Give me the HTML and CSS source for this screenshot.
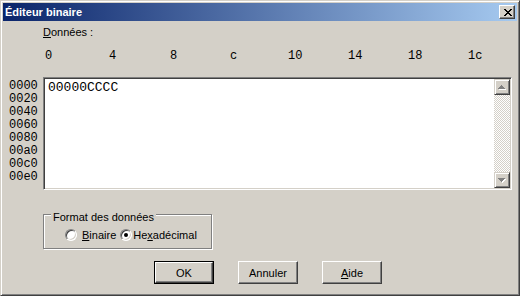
FILE: index.html
```html
<!DOCTYPE html>
<html lang="fr">
<head>
    <meta charset="UTF-8">
    <title>Éditeur binaire</title>
    <link rel="stylesheet" href="styles.css">
</head>
<body>

<div class="window">
    <div class="titlebar">
        <span class="title">Éditeur binaire</span>
        <span class="close">
            <svg width="8" height="7" viewBox="0 0 8 7" shape-rendering="crispEdges">
                <path fill="#000" d="M0 0h2v1H0z M6 0h2v1H6z M1 1h2v1H1z M5 1h2v1H5z M2 2h4v1H2z M3 3h2v1H3z M2 4h4v1H2z M1 5h2v1H1z M5 5h2v1H5z M0 6h2v1H0z M6 6h2v1H6z"/>
            </svg>
        </span>
    </div>

    <div class="content">
        <div class="data-label"><u>D</u>onnées :</div>

        <div class="columns">
            <span>0</span><span>4</span><span>8</span><span>c</span>
            <span>10</span><span>14</span><span>18</span><span>1c</span>
        </div>

        <div class="editor">
            <div class="offsets">
                <div>0000</div>
                <div>0020</div>
                <div>0040</div>
                <div>0060</div>
                <div>0080</div>
                <div>00a0</div>
                <div>00c0</div>
                <div>00e0</div>
            </div>
            <div class="textbox">
                <div class="hex">00000CCCC</div>
                <div class="scrollbar">
                    <span class="scroll-btn">
                        <svg width="8" height="5" viewBox="0 0 8 5" shape-rendering="crispEdges">
                            <path fill="#fff" transform="translate(1,1)" d="M3 0h1v1h1v1h1v1h1v1H0v-1h1v-1h1v-1h1z"/>
                            <path fill="#808080" d="M3 0h1v1h1v1h1v1h1v1H0v-1h1v-1h1v-1h1z"/>
                        </svg>
                    </span>
                    <span class="track"></span>
                    <span class="scroll-btn">
                        <svg width="8" height="5" viewBox="0 0 8 5" shape-rendering="crispEdges">
                            <path fill="#fff" transform="translate(1,1)" d="M0 0h7v1h-1v1h-1v1h-1v1h-1v-1h-1v-1h-1v-1h-1z"/>
                            <path fill="#808080" d="M0 0h7v1h-1v1h-1v1h-1v1h-1v-1h-1v-1h-1v-1h-1z"/>
                        </svg>
                    </span>
                </div>
            </div>
        </div>

        <div class="group">
            <div class="group-title">Format des données</div>
            <div class="radios">
                <label class="radio"><span class="dot"></span><span><u>B</u>inaire</span></label>
                <label class="radio checked"><span class="dot"></span><span>He<u>x</u>adécimal</span></label>
            </div>
        </div>

        <div class="buttons">
            <span class="btn default"><span>OK</span></span>
            <span class="btn"><span>Annuler</span></span>
            <span class="btn"><span><u>A</u>ide</span></span>
        </div>
    </div>
</div>

</body>
</html>
```

FILE: styles.css
```css
*{
    margin: 0px;
    padding: 0px;
    box-sizing: border-box;
}
body{
    font: 11px "Liberation Sans", Arial, sans-serif;
    color: #000;
    background-color: #d4d0c8;
}
u{
    text-decoration: underline;
    text-underline-offset: 1px;
}

/* cadre de la fenêtre */
.window{
    width: 520px;
    height: 296px;
    display: flex;
    flex-direction: column;
    padding: 2px;
    background-color: #d4d0c8;
    border: 1px solid;
    border-color: #d4d0c8 #404040 #404040 #d4d0c8;
    box-shadow: inset 1px 1px #fff, inset -1px -1px #808080;
}
.titlebar{
    height: 18px;
    display: flex;
    align-items: center;
    justify-content: space-between;
    padding: 0 2px;
    background: linear-gradient(to right, #0a246a, #a6caf0);
    color: #fff;
    font-weight: bold;
    line-height: 18px;
}
.close{
    width: 16px;
    height: 14px;
    display: flex;
    align-items: center;
    justify-content: center;
    padding-left: 1px;
    background-color: #d4d0c8;
    border: 1px solid;
    border-color: #fff #404040 #404040 #fff;
    box-shadow: inset -1px -1px #808080;
}

/* contenu */
.content{
    flex: 1;
    display: flex;
    flex-direction: column;
    padding-top: 5px;
}
.data-label{
    margin-left: 40px;
    line-height: 13px;
}
.columns{
    margin-top: 10px;
    padding-left: 42px;
    display: grid;
    grid-template-columns: 64px 61px 60px 58px 60px 60px 60px auto;
    font: 12px "Liberation Mono", "Courier New", monospace;
    line-height: 14px;
}

.editor{
    margin-top: 14px;
    display: flex;
    height: 113px;
}
.offsets{
    width: 40px;
    padding: 3px 0 0 6px;
    font: 12px "Liberation Mono", "Courier New", monospace;
    line-height: 13px;
}
.textbox{
    width: 469px;
    display: flex;
    padding: 1px;
    background-color: #fff;
    border: 1px solid;
    border-color: #808080 #fff #fff #808080;
    box-shadow: inset 1px 1px #404040, inset -1px -1px #d4d0c8;
}
.hex{
    flex: 1;
    padding: 1px 0 0 3px;
    font: 13px "Liberation Mono", "Courier New", monospace;
    line-height: 15px;
}
.scrollbar{
    width: 16px;
    display: flex;
    flex-direction: column;
}
.scroll-btn{
    width: 16px;
    height: 16px;
    display: flex;
    align-items: center;
    justify-content: center;
    background-color: #d4d0c8;
    border: 1px solid;
    border-color: #d4d0c8 #404040 #404040 #d4d0c8;
    box-shadow: inset 1px 1px #fff, inset -1px -1px #808080;
}
.track{
    flex: 1;
    background: repeating-conic-gradient(#d4d0c8 0 25%, #fff 0 50%) 0 0 / 2px 2px;
}

/* cadre de groupe */
.group{
    margin: 24px 0 0 40px;
    width: 169px;
    height: 35px;
    display: flex;
    flex-direction: column;
    align-items: flex-start;
    border: 1px solid #808080;
    box-shadow: inset 1px 1px #fff, 1px 1px #fff;
}
.group-title{
    margin: -4px 0 0 7px;
    padding: 0 2px;
    line-height: 13px;
    background-color: #d4d0c8;
}
.radios{
    margin-top: 5px;
    padding-left: 21px;
    display: flex;
    align-items: center;
    height: 12px;
}
.radio{
    display: flex;
    align-items: center;
    gap: 5px;
    margin-right: 4px;
    line-height: 13px;
}
.radio.checked{
    gap: 1px;
}
.dot{
    width: 12px;
    height: 12px;
    border-radius: 50%;
    display: flex;
    align-items: center;
    justify-content: center;
    background-color: #fff;
    border: 1px solid;
    border-color: #808080 #fff #fff #808080;
    box-shadow: inset 1px 1px #404040, inset -1px -1px #d4d0c8;
}
.checked .dot::after{
    content: "";
    width: 4px;
    height: 4px;
    border-radius: 50%;
    background-color: #000;
}

/* boutons */
.buttons{
    margin-top: 12px;
    padding-left: 151px;
    display: flex;
    gap: 24px;
}
.btn{
    width: 60px;
    height: 23px;
    display: flex;
    border: 1px solid;
    border-color: #fff #404040 #404040 #fff;
    box-shadow: inset -1px -1px #808080;
}
.btn span{
    flex: 1;
    display: flex;
    align-items: center;
    justify-content: center;
}
.btn.default{
    border: 1px solid #000;
    box-shadow: none;
}
.btn.default span{
    border: 1px solid;
    border-color: #fff #404040 #404040 #fff;
    box-shadow: inset -1px -1px #808080;
}
```
